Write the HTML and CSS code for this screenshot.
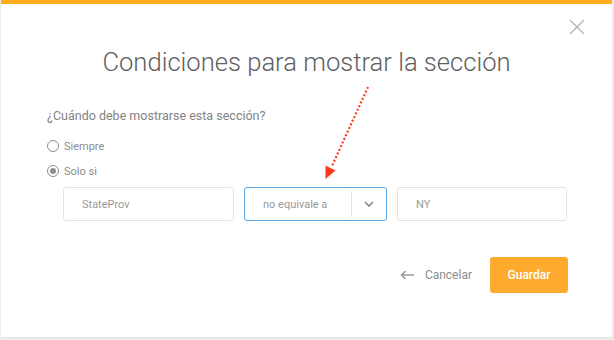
FILE: index.html
```html
<!DOCTYPE html>
<html lang="es">
<head>
<meta charset="utf-8">
<title>Condiciones</title>
<link rel="stylesheet" href="styles.css">
</head>
<body>
<div class="modal">
  <button class="close" aria-label="Cerrar">
    <svg width="16" height="16" viewBox="0 0 16 16"><path d="M1 1L15 15M15 1L1 15" stroke="#b5b5b5" stroke-width="1.4" fill="none"/></svg>
  </button>
  <h1 class="title">Condiciones para mostrar la sección</h1>
  <div class="content">
    <p class="question">¿Cuándo debe mostrarse esta sección?</p>
    <label class="radio"><span class="dot"></span>Siempre</label>
    <label class="radio radio-checked"><span class="dot"></span>Solo si</label>
    <div class="fields">
      <div class="field field-a">StateProv</div>
      <div class="field field-select">
        <span class="select-text">no equivale a</span>
        <span class="select-btn">
          <svg width="10" height="6" viewBox="0 0 10 6"><path d="M1 1L5 5L9 1" stroke="#777" stroke-width="1.3" fill="none"/></svg>
        </span>
      </div>
      <div class="field field-c">NY</div>
    </div>
    <div class="footer">
      <span class="cancel">
        <svg width="15" height="10" viewBox="0 0 15 10"><path d="M14 5H1.5M5.5 1L1.5 5L5.5 9" stroke="#999" stroke-width="1.6" fill="none"/></svg>
        Cancelar
      </span>
      <button class="save">Guardar</button>
    </div>
  </div>
  <svg class="pointer" width="614" height="340" viewBox="0 0 614 340">
    <path d="M368 87L332 166" stroke="#ff3b1f" stroke-width="2.2" stroke-dasharray="2 2" fill="none"/>
    <path d="M325.5 179L325.5 165.5L335.5 170.5Z" fill="#ff3b1f"/>
  </svg>
</div>
</body>
</html>
```
FILE: styles.css
```css
* { box-sizing: border-box; }
html, body { margin: 0; padding: 0; }
body {
  background: #ececec;
  width: 614px;
  height: 340px;
  font-family: Roboto, "Liberation Sans", Arial, sans-serif;
}
.modal {
  position: relative;
  margin-left: 1px;
  width: 611px;
  height: 338px;
  background: #fff;
  border-top: 4px solid #fdac1b;
  border-bottom: 1px solid #e2e2e2;
  border-radius: 0 0 3px 3px;
}
.close {
  position: absolute;
  top: 15px;
  right: 27px;
  padding: 0;
  border: 0;
  background: none;
  width: 16px;
  height: 16px;
}
.title {
  margin: 41px 0 0;
  font-size: 25.6px;
  line-height: 34px;
  font-weight: 300;
  color: #5f5f5f;
  text-align: center;
}
.content {
  padding: 0 44px 0 46px;
}
.question {
  margin: 27px 0 0;
  font-size: 12.5px;
  line-height: 20px;
  color: #828282;
}
.radio {
  display: flex;
  align-items: center;
  gap: 5px;
  height: 20px;
  margin-top: 10px;
  font-size: 11px;
  color: #8c8c8c;
}
.radio + .radio { margin-top: 5px; }
.dot {
  width: 12px;
  height: 12px;
  border: 1.2px solid #8f8f8f;
  border-radius: 50%;
  display: flex;
  align-items: center;
  justify-content: center;
}
.radio-checked .dot::after {
  content: "";
  width: 6px;
  height: 6px;
  border-radius: 50%;
  background: #8f8f8f;
}
.fields {
  display: flex;
  gap: 10px;
  margin: 6px 0 0 16px;
}
.field {
  height: 34px;
  border: 1px solid #e3e3e3;
  border-radius: 3px;
  display: flex;
  align-items: center;
  padding-left: 18px;
  font-size: 11px;
  color: #999;
}
.field-a { width: 171px; }
.field-select {
  width: 143px;
  border-color: #5aa9e6;
  justify-content: space-between;
  padding-right: 0;
}
.field-c { width: 170px; }
.select-btn {
  width: 35px;
  height: 26px;
  border-left: 1px solid #e2e2e2;
  display: flex;
  align-items: center;
  justify-content: center;
}
.footer {
  display: flex;
  justify-content: flex-end;
  align-items: center;
  gap: 18px;
  margin-top: 36px;
}
.cancel {
  display: flex;
  align-items: center;
  gap: 10px;
  font-size: 12px;
  color: #8c8c8c;
}
.save {
  width: 78px;
  height: 36px;
  border: 0;
  border-radius: 3px;
  background: #fdaa2f;
  color: #fff;
  font-family: Roboto, "Liberation Sans", Arial, sans-serif;
  font-size: 12px;
  font-weight: 500;
  padding: 0;
}
.pointer {
  position: absolute;
  left: -1px;
  top: -4px;
  pointer-events: none;
}
```
